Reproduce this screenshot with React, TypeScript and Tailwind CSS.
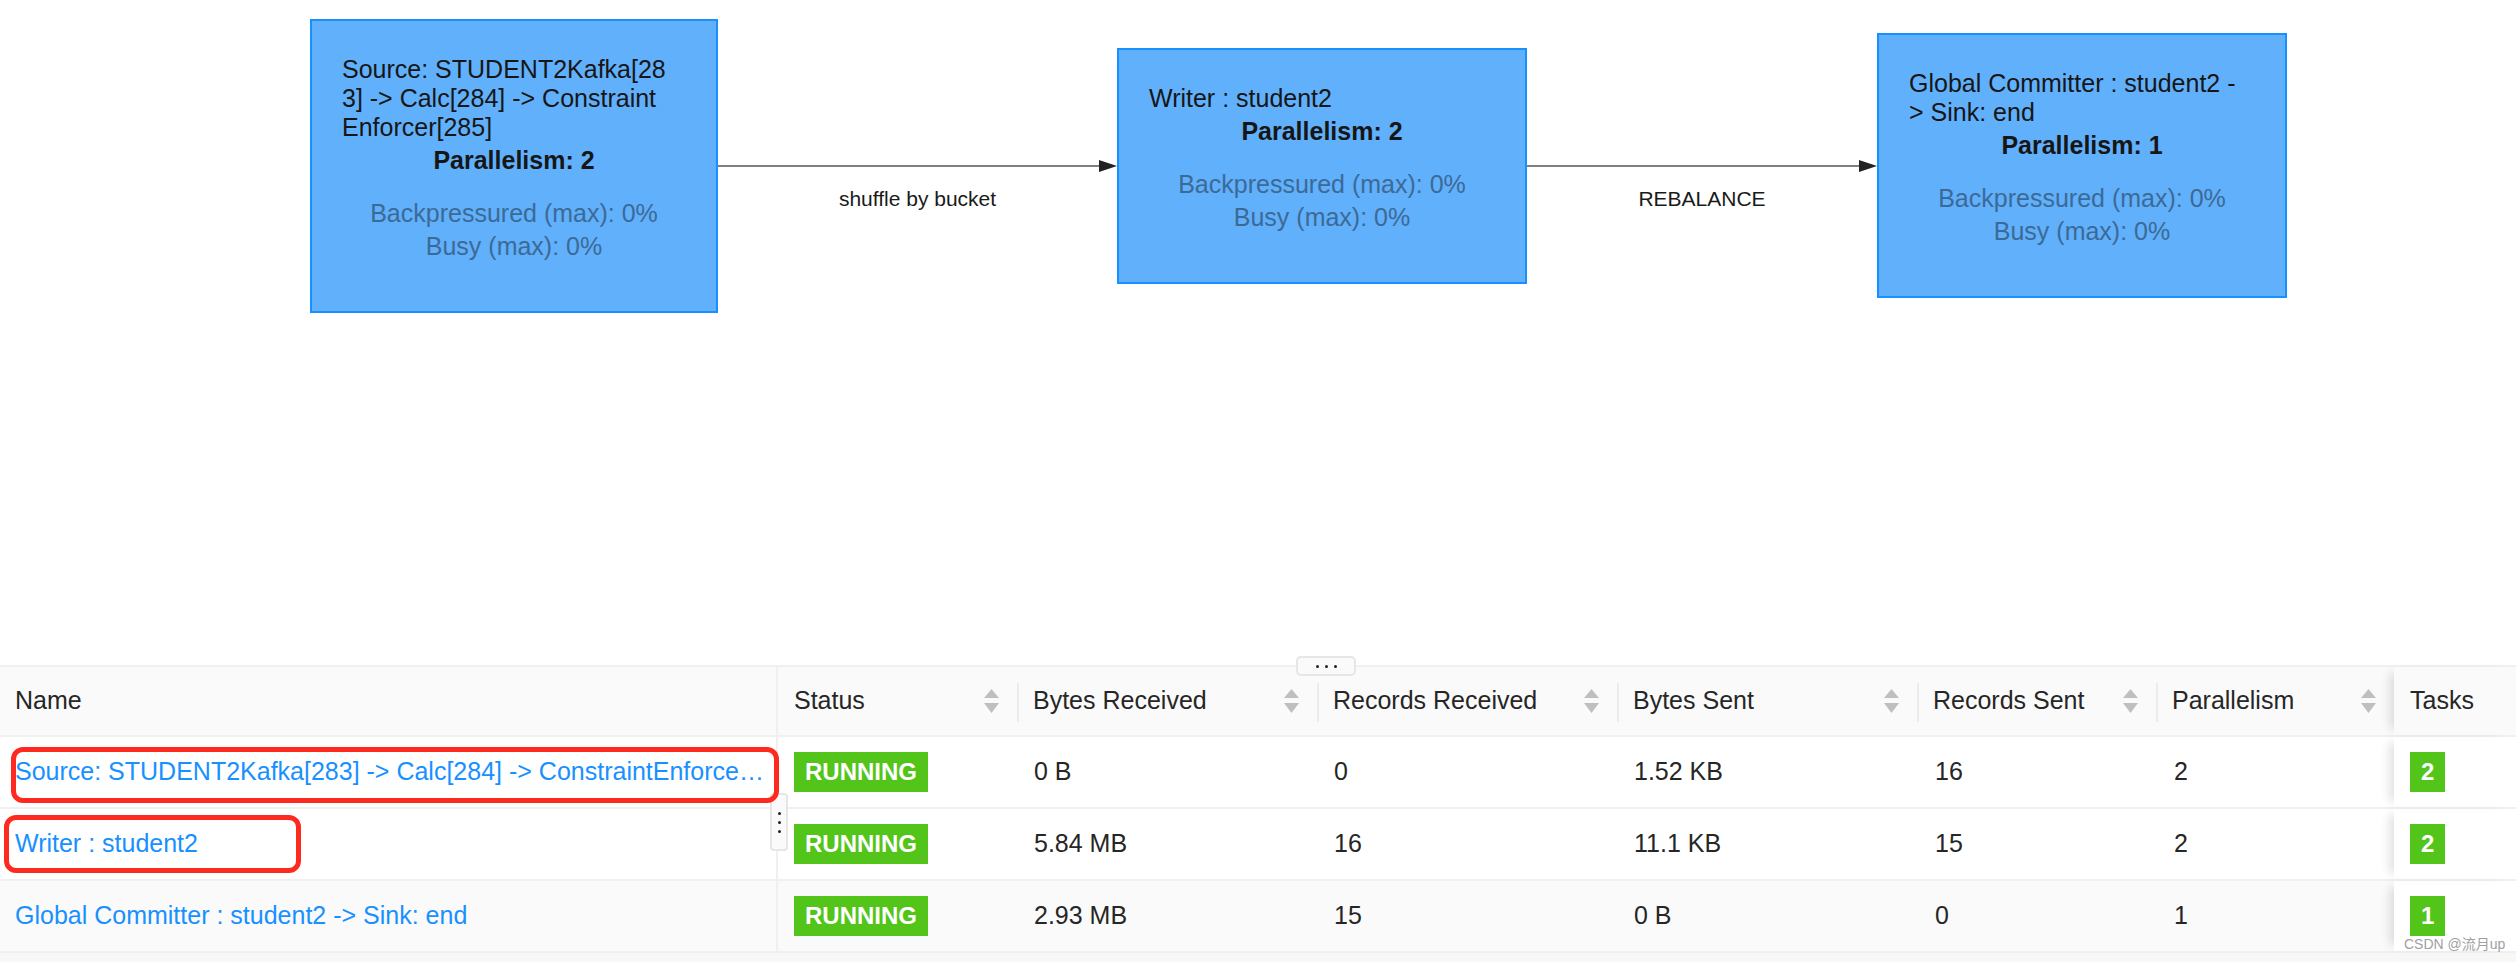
import React from 'react'

// Flink job graph + vertex table

interface JobNode {
  title: string[]
  parallelism: number
  width: string
}

const NODES: JobNode[] = [
  { title: ['Source: STUDENT2Kafka[28', '3] -> Calc[284] -> Constraint', 'Enforcer[285]'], parallelism: 2, width: 'w-[408px]' },
  { title: ['Writer : student2'], parallelism: 2, width: 'w-[410px]' },
  { title: ['Global Committer : student2 -', '> Sink: end'], parallelism: 1, width: 'w-[410px]' },
]

const EDGES = [
  { label: 'shuffle by bucket', width: 'w-[399px]' },
  { label: 'REBALANCE', width: 'w-[350px]' },
]

interface Row {
  name: string
  bytesIn: string
  recordsIn: string
  bytesOut: string
  recordsOut: string
  parallelism: number
  tasks: number
}

// name column is clipped the way the dashboard shows it
const ROWS: Row[] = [
  { name: 'Source: STUDENT2Kafka[283] -> Calc[284] -> ConstraintEnforce…', bytesIn: '0 B', recordsIn: '0', bytesOut: '1.52 KB', recordsOut: '16', parallelism: 2, tasks: 2 },
  { name: 'Writer : student2', bytesIn: '5.84 MB', recordsIn: '16', bytesOut: '11.1 KB', recordsOut: '15', parallelism: 2, tasks: 2 },
  { name: 'Global Committer : student2 -> Sink: end', bytesIn: '2.93 MB', recordsIn: '15', bytesOut: '0 B', recordsOut: '0', parallelism: 1, tasks: 1 },
]

const GRID = 'grid grid-cols-[778px_239px_300px_300px_300px_239px_238px_122px]'
const TASKS_SHADOW = 'relative shadow-[-10px_0_10px_-6px_rgba(0,0,0,0.13)]'

function Node({ node }: { node: JobNode }) {
  return (
    <div className={`${node.width} flex-none border-2 border-[#1890ff] bg-[#61b0fb] px-[30px] pt-[34px] pb-[48px] text-[25px]`}>
      <div className="leading-[29px] text-[#161616]">
        {node.title.map((line) => (
          <div key={line}>{line}</div>
        ))}
      </div>
      <div className="mt-[2px] text-center font-bold leading-[33px] text-[#161616]">Parallelism: {node.parallelism}</div>
      <div className="mt-[20px] text-center leading-[33px] text-[#3c6a97]">
        <div>Backpressured (max): 0%</div>
        <div>Busy (max): 0%</div>
      </div>
    </div>
  )
}

function Edge({ label, width }: { label: string; width: string }) {
  return (
    <div className={`${width} flex flex-none flex-col`}>
      <div className="h-[48px]" />
      <div className="flex h-[14px] items-center">
        <div className="h-[2px] flex-1 bg-[#808080]" />
        <svg width="18" height="12" viewBox="0 0 18 12" className="flex-none">
          <polygon points="0,0 18,6 0,12" fill="#222" />
        </svg>
      </div>
      <div className="h-[48px] pt-[14px] text-center text-[21px] leading-[24px] text-[#1a1a1a]">{label}</div>
    </div>
  )
}

function SortIcon() {
  return (
    <svg width="15" height="25" viewBox="0 0 15 25" className="flex-none">
      <polygon points="7.5,0 15,9 0,9" fill="#bfbfbf" />
      <polygon points="0,14 15,14 7.5,24" fill="#bfbfbf" />
    </svg>
  )
}

function HeaderCell({ label, divider }: { label: string; divider?: boolean }) {
  return (
    <div
      className={`relative flex items-center justify-between pl-[16px] pr-[18px] ${
        divider ? 'before:absolute before:left-0 before:top-[16px] before:h-[39px] before:w-[2px] before:bg-[#ececec]' : ''
      }`}
    >
      <span>{label}</span>
      <SortIcon />
    </div>
  )
}

function Badge({ children }: { children: React.ReactNode }) {
  return (
    <span className="inline-flex h-[40px] items-center bg-[#52c41a] px-[11px] text-[24px] font-bold text-white">{children}</span>
  )
}

export default function App() {
  return (
    <div className="relative h-[962px] w-[2516px] overflow-hidden bg-white font-['Liberation_Sans','Noto_Sans_CJK_SC',sans-serif]">
      {/* job graph */}
      <section className="h-[665px]">
        <div className="flex h-[331px] items-center pl-[310px]">
          <Node node={NODES[0]} />
          <Edge {...EDGES[0]} />
          <Node node={NODES[1]} />
          <Edge {...EDGES[1]} />
          <Node node={NODES[2]} />
        </div>
      </section>

      {/* vertex table */}
      <section className="relative text-[25px] text-[#262626]">
        <div className={`${GRID} h-[72px] border-y-2 border-[#f0f0f0] bg-[#fafafa]`}>
          <div className="flex items-center border-r-2 border-[#f0f0f0] pl-[15px]">Name</div>
          <HeaderCell label="Status" />
          <HeaderCell label="Bytes Received" divider />
          <HeaderCell label="Records Received" divider />
          <HeaderCell label="Bytes Sent" divider />
          <HeaderCell label="Records Sent" divider />
          <HeaderCell label="Parallelism" divider />
          <div className={`${TASKS_SHADOW} flex items-center bg-[#fafafa] pl-[16px]`}>Tasks</div>
        </div>

        {ROWS.map((row, i) => (
          <div key={row.name} className={`${GRID} h-[72px] border-b-2 border-[#f0f0f0] ${i === 2 ? 'bg-[#fafafa]' : 'bg-white'}`}>
            <div className="flex min-w-0 items-center overflow-hidden whitespace-nowrap border-r-2 border-[#f0f0f0] pl-[15px]">
              <span className="text-[#1890ff]">{row.name}</span>
            </div>
            <div className="flex items-center pl-[16px]">
              <Badge>RUNNING</Badge>
            </div>
            <div className="flex items-center pl-[17px]">{row.bytesIn}</div>
            <div className="flex items-center pl-[17px]">{row.recordsIn}</div>
            <div className="flex items-center pl-[17px]">{row.bytesOut}</div>
            <div className="flex items-center pl-[18px]">{row.recordsOut}</div>
            <div className="flex items-center pl-[18px]">{row.parallelism}</div>
            <div className={`${TASKS_SHADOW} flex items-center bg-white pl-[16px]`}>
              <Badge>{row.tasks}</Badge>
            </div>
          </div>
        ))}
        <div className="h-[9px] bg-[#f7f7f7]" />

        {/* column resize handles */}
        <div className="absolute left-[1296px] top-[-9px] flex h-[20px] w-[60px] items-center justify-center gap-[6px] rounded-[5px] border-2 border-[#e6e6e6] bg-[#fafafa]">
          <span className="h-[3px] w-[3px] rounded-full bg-[#222]" />
          <span className="h-[3px] w-[3px] rounded-full bg-[#222]" />
          <span className="h-[3px] w-[3px] rounded-full bg-[#222]" />
        </div>
        <div className="absolute left-[770px] top-[128px] flex h-[58px] w-[18px] flex-col items-center justify-center gap-[6px] rounded-[4px] border-2 border-[#e6e6e6] bg-[#fafafa]">
          <span className="h-[3px] w-[3px] rounded-full bg-[#222]" />
          <span className="h-[3px] w-[3px] rounded-full bg-[#222]" />
          <span className="h-[3px] w-[3px] rounded-full bg-[#222]" />
        </div>

        {/* red annotations */}
        <div className="pointer-events-none absolute left-[11px] top-[82px] h-[56px] w-[768px] rounded-[12px] border-[5px] border-[#ff2a1f]" />
        <div className="pointer-events-none absolute left-[4px] top-[150px] h-[58px] w-[297px] rounded-[12px] border-[5px] border-[#ff2a1f]" />

        <div className="absolute left-[2404px] top-[271px] text-[14px] leading-[16px] text-[#a0a0a0]">CSDN @流月up</div>
      </section>
    </div>
  )
}
